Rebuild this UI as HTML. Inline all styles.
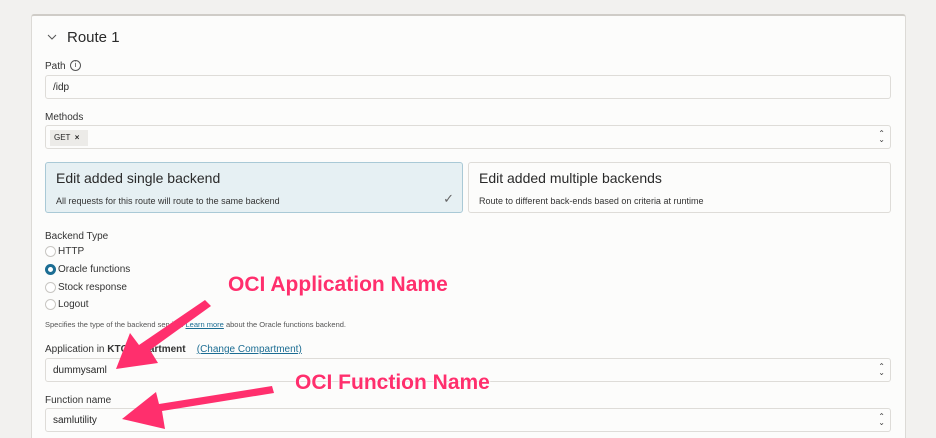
<!DOCTYPE html><html><head><style>
*{box-sizing:border-box;margin:0;padding:0}
html,body{width:936px;height:438px;overflow:hidden}
body{background:#f2f1ef;font-family:"Liberation Sans",sans-serif;color:#262626;position:relative}
.panel{position:absolute;left:31px;top:14px;width:875px;height:440px;background:#fcfcfb;border:1px solid #dcdad6;border-top:2px solid #cfccc7;border-radius:3px}
.a{position:absolute}
.lbl{font-size:10px;color:#333}
.inp{position:absolute;left:45px;width:846px;height:24px;border:1px solid #dedcd8;border-radius:3px;background:#fcfcfb;font-size:10px;padding-left:7px;line-height:23px}
.ud{position:absolute;right:5px;top:5px;font-size:8px;line-height:6px;color:#444;text-align:center}
.card{position:absolute;top:162px;height:51px;border:1px solid #dedcd8;border-radius:3px;background:#fcfcfb}
.card .t{position:absolute;left:10px;top:7px;font-size:14px;color:#2a2a2a}
.card .s{position:absolute;left:10px;top:33px;font-size:9px;color:#333}
.r{position:absolute;left:45px;width:11px;height:11px;border:1px solid #c8c6c2;border-radius:50%;background:#fff}
.rt{position:absolute;left:58px;font-size:10px;color:#333}
.ann{position:absolute;font-weight:bold;font-size:21px;color:#ff2f6d;text-shadow:0 0 2px #fff,0 0 3px #fff}
</style></head><body>
<div class="panel"></div>
<svg class="a" style="left:46px;top:32px" width="12" height="10"><path d="M2 3 L6 7 L10 3" stroke="#555" fill="none" stroke-width="1"/></svg>
<div class="a" style="left:67px;top:29px;font-size:15px;color:#2a2a2a">Route 1</div>
<div class="a lbl" style="left:45px;top:61px">Path</div>
<div class="a" style="left:70px;top:60px;width:11px;height:11px;border:1px solid #555;border-radius:50%;font-size:7px;text-align:center;line-height:9px">i</div>
<div class="inp" style="top:75px">/idp</div>
<div class="a lbl" style="left:45px;top:112px">Methods</div>
<div class="inp" style="top:125px"><span style="position:absolute;left:4px;top:4px;width:38px;height:16px;background:#ecebe8;font-size:8px;line-height:16px;padding-left:4px">GET &nbsp;<b>×</b></span><div class="ud">⌃<br>⌄</div></div>
<div class="card" style="left:45px;width:418px;background:#e6f0f3;border-color:#a9c9d6"><div class="t">Edit added single backend</div><div class="s">All requests for this route will route to the same backend</div><div style="position:absolute;right:8px;top:28px;font-size:13px;color:#666">✓</div></div>
<div class="card" style="left:468px;width:423px"><div class="t">Edit added multiple backends</div><div class="s">Route to different back-ends based on criteria at runtime</div></div>
<div class="a lbl" style="left:45px;top:231px">Backend Type</div>
<div class="r" style="top:246px"></div><div class="rt" style="top:246px">HTTP</div>
<div class="r" style="top:264px;border:3px solid #1c6d93"></div><div class="rt" style="top:264px">Oracle functions</div>
<div class="r" style="top:282px"></div><div class="rt" style="top:282px">Stock response</div>
<div class="r" style="top:299px"></div><div class="rt" style="top:299px">Logout</div>
<div class="a" style="left:45px;top:320px;font-size:7.5px;color:#555">Specifies the type of the backend service. <u style="color:#1c6d93">Learn more</u> about the Oracle functions backend.</div>
<div class="a lbl" style="left:45px;top:344px">Application in <b>KTCompartment</b> &nbsp;&nbsp;&nbsp;<u style="color:#1c6d93">(Change Compartment)</u></div>
<div class="inp" style="top:358px">dummysaml<div class="ud">⌃<br>⌄</div></div>
<div class="a lbl" style="left:45px;top:395px">Function name</div>
<div class="inp" style="top:408px">samlutility<div class="ud">⌃<br>⌄</div></div>
<svg class="a" style="left:0;top:0" width="936" height="438">
<path d="M205 300 L211 306 L150 350 L158 363 L116 369 L130 333 L139 345 Z" fill="#ff2f6d"/>
<path d="M272 386 L274 393 L162 411 L165 429 L122 419 L156 392 L159 404 Z" fill="#ff2f6d"/>
</svg>
<div class="ann" style="left:228px;top:273px">OCI Application Name</div>
<div class="ann" style="left:295px;top:371px">OCI Function Name</div>
</body></html>
